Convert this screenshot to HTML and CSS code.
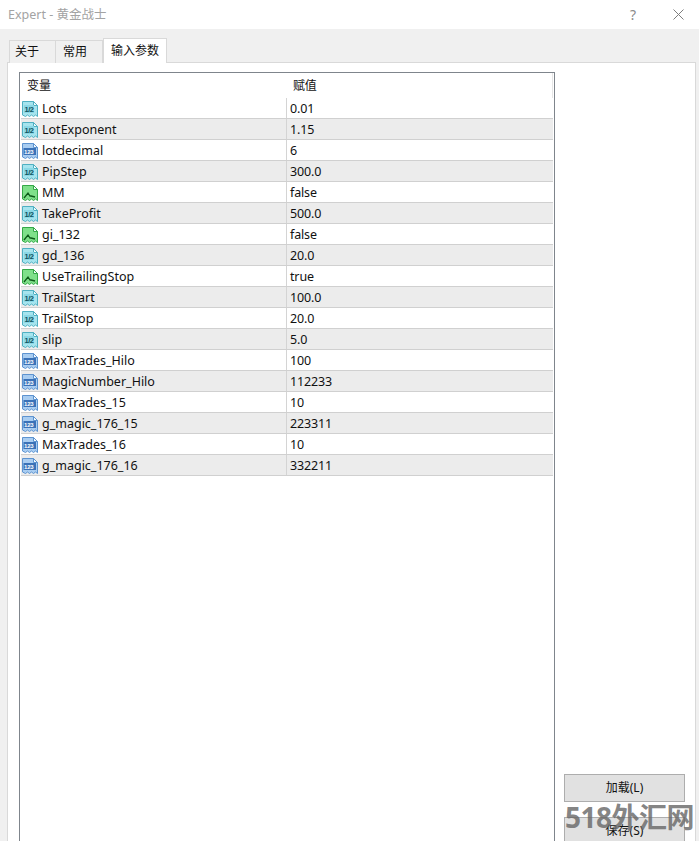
FILE: index.html
```html
<!DOCTYPE html>
<html lang="zh">
<head>
<meta charset="utf-8">
<title>Expert - 黄金战士</title>
<link rel="stylesheet" href="styles.css">
</head>
<body>
<svg class="defs" width="0" height="0">
  <defs>
    <symbol id="sheet" viewBox="0 0 16 16">
      <path d="M.5 .5h11l4 4v11l-2-1.5-2 1.5-2-1.5-2 1.5-2-1.5-2 1.5-3-1.5z" fill="currentColor"/>
      <path d="M11.5 .5v4h4z" fill="#f4fbfd"/>
    </symbol>
  </defs>
</svg>
<div class="window">
  <header class="titlebar">
    <div class="title">Expert - 黄金战士</div>
    <div class="controls">
      <span class="help">?</span>
      <svg class="close" width="11" height="11" viewBox="0 0 11 11"><path d="M.5.5l10 10M10.5.5l-10 10" stroke="#7d7d7d" fill="none"/></svg>
    </div>
  </header>
  <main class="body">
    <nav class="tabs">
      <div class="tab t1">关于</div>
      <div class="tab t2">常用</div>
      <div class="tab active">输入参数</div>
    </nav>
    <section class="panel">
      <div class="grid">
        <div class="row head"><div class="c1 hname">变量</div><div class="c2 hval">赋值</div></div>
        <div class="row"><div class="c1"><svg class="ic dbl"><use href="#sheet"/><rect class="band" x="2" y="4" width="10" height="8"/><text x="2.5" y="11">1/2</text></svg>Lots</div><div class="c2">0.01</div></div>
        <div class="row alt"><div class="c1"><svg class="ic dbl"><use href="#sheet"/><rect class="band" x="2" y="4" width="10" height="8"/><text x="2.5" y="11">1/2</text></svg>LotExponent</div><div class="c2">1.15</div></div>
        <div class="row"><div class="c1"><svg class="ic int"><use href="#sheet"/><rect class="band" x="1.5" y="5" width="12.5" height="7"/><text x="2" y="11">123</text></svg>lotdecimal</div><div class="c2">6</div></div>
        <div class="row alt"><div class="c1"><svg class="ic dbl"><use href="#sheet"/><rect class="band" x="2" y="4" width="10" height="8"/><text x="2.5" y="11">1/2</text></svg>PipStep</div><div class="c2">300.0</div></div>
        <div class="row"><div class="c1"><svg class="ic boo"><use href="#sheet"/><path class="tick" d="M2 13l4-5 2 3h1l4 1"/></svg>MM</div><div class="c2">false</div></div>
        <div class="row alt"><div class="c1"><svg class="ic dbl"><use href="#sheet"/><rect class="band" x="2" y="4" width="10" height="8"/><text x="2.5" y="11">1/2</text></svg>TakeProfit</div><div class="c2">500.0</div></div>
        <div class="row"><div class="c1"><svg class="ic boo"><use href="#sheet"/><path class="tick" d="M2 13l4-5 2 3h1l4 1"/></svg>gi_132</div><div class="c2">false</div></div>
        <div class="row alt"><div class="c1"><svg class="ic dbl"><use href="#sheet"/><rect class="band" x="2" y="4" width="10" height="8"/><text x="2.5" y="11">1/2</text></svg>gd_136</div><div class="c2">20.0</div></div>
        <div class="row"><div class="c1"><svg class="ic boo"><use href="#sheet"/><path class="tick" d="M2 13l4-5 2 3h1l4 1"/></svg>UseTrailingStop</div><div class="c2">true</div></div>
        <div class="row alt"><div class="c1"><svg class="ic dbl"><use href="#sheet"/><rect class="band" x="2" y="4" width="10" height="8"/><text x="2.5" y="11">1/2</text></svg>TrailStart</div><div class="c2">100.0</div></div>
        <div class="row"><div class="c1"><svg class="ic dbl"><use href="#sheet"/><rect class="band" x="2" y="4" width="10" height="8"/><text x="2.5" y="11">1/2</text></svg>TrailStop</div><div class="c2">20.0</div></div>
        <div class="row alt"><div class="c1"><svg class="ic dbl"><use href="#sheet"/><rect class="band" x="2" y="4" width="10" height="8"/><text x="2.5" y="11">1/2</text></svg>slip</div><div class="c2">5.0</div></div>
        <div class="row"><div class="c1"><svg class="ic int"><use href="#sheet"/><rect class="band" x="1.5" y="5" width="12.5" height="7"/><text x="2" y="11">123</text></svg>MaxTrades_Hilo</div><div class="c2">100</div></div>
        <div class="row alt"><div class="c1"><svg class="ic int"><use href="#sheet"/><rect class="band" x="1.5" y="5" width="12.5" height="7"/><text x="2" y="11">123</text></svg>MagicNumber_Hilo</div><div class="c2">112233</div></div>
        <div class="row"><div class="c1"><svg class="ic int"><use href="#sheet"/><rect class="band" x="1.5" y="5" width="12.5" height="7"/><text x="2" y="11">123</text></svg>MaxTrades_15</div><div class="c2">10</div></div>
        <div class="row alt"><div class="c1"><svg class="ic int"><use href="#sheet"/><rect class="band" x="1.5" y="5" width="12.5" height="7"/><text x="2" y="11">123</text></svg>g_magic_176_15</div><div class="c2">223311</div></div>
        <div class="row"><div class="c1"><svg class="ic int"><use href="#sheet"/><rect class="band" x="1.5" y="5" width="12.5" height="7"/><text x="2" y="11">123</text></svg>MaxTrades_16</div><div class="c2">10</div></div>
        <div class="row alt"><div class="c1"><svg class="ic int"><use href="#sheet"/><rect class="band" x="1.5" y="5" width="12.5" height="7"/><text x="2" y="11">123</text></svg>g_magic_176_16</div><div class="c2">332211</div></div>
      </div>
      <aside class="side">
        <button class="btn">加载(L)</button>
        <button class="btn">保存(S)</button>
      </aside>
    </section>
  </main>
  <div class="mark">518外汇网</div>
</div>
</body>
</html>
```
FILE: styles.css
```css
* { box-sizing: border-box; }
html, body { margin: 0; height: 100%; overflow: hidden; }
body {
  background: #fff;
  color: #111;
  font: 12.5px/21px "Noto Sans", "Noto Sans CJK SC", sans-serif;
}
.defs { position: absolute; }
.window { position: relative; width: 699px; height: 841px; display: flex; flex-direction: column; overflow: hidden; }
.titlebar { height: 29px; flex: none; display: flex; justify-content: space-between; align-items: center; padding-left: 8px; background: #fff; }
.title { font-size: 12.5px; color: #a3a3a3; }
.controls { display: flex; align-items: center; gap: 37px; padding-right: 15px; }
.help { color: #8a8a8a; font-size: 14px; }
.close { display: block; }
.body { flex: 1; display: flex; flex-direction: column; background: #f0f0f0; padding: 9px 3px 0 7px; min-height: 0; }
.tabs { display: flex; height: 25px; flex: none; align-items: flex-end; padding-left: 2px; position: relative; z-index: 1; margin-bottom: -1px; }
.tab { height: 23px; border: 1px solid #d9d9d9; border-bottom: 0; background: #f0f0f0; color: #111; line-height: 21px; font-size: 12px; }
.t1 { width: 47px; padding-left: 5px; }
.t2 { width: 47px; padding-left: 7px; border-left: 0; }
.active { width: 64px; height: 25px; padding-left: 7px; background: #fff; line-height: 23px; }
.panel { flex: 1; background: #fff; border: 1px solid #d9d9d9; border-bottom: 0; display: flex; padding: 9px 10px 0 11px; min-height: 0; }
.grid { width: 536px; flex: none; border: 1px solid #7f858c; border-bottom: 0; padding: 0 1px; }
.row { display: flex; height: 21px; border-bottom: 1px solid #d0d0d0; }
.head { height: 25px; border-bottom: 0; border-right: 1px solid #e6e6e6; }
.head .c1, .head .c2 { border: 0; font-size: 12px; line-height: 26px; padding-top: 0; }
.head .hname { padding-left: 6px; }
.head .hval { padding-left: 6px; }
.alt { background: #ececec; }
.c1 { width: 266px; flex: none; display: flex; align-items: center; gap: 4px; padding: 1px 0 0 1px; border-right: 1px solid #d4d4d4; line-height: 20px; }
.c2 { flex: 1; padding: 1px 0 0 3px; line-height: 20px; letter-spacing: -.15px; }
.ic { width: 16px; height: 16px; flex: none; }
.ic text { font-family: "Liberation Sans", sans-serif; font-weight: bold; stroke: none; }
.ic .band { stroke: none; }
.dbl { color: #a6e4ee; stroke: #4fb0c2; }
.dbl .band { fill: #8ad8e6; }
.dbl text { fill: #0f5260; font-size: 7.5px; letter-spacing: -.5px; }
.int { color: #a9cdf1; stroke: #5d93d0; }
.int .band { fill: #3a72b8; }
.int text { fill: #fff; font-size: 6px; letter-spacing: -.2px; }
.boo { color: #7fe08a; stroke: #35a848; }
.tick { fill: none; stroke: #0c5a18; stroke-width: 1.3; }
.side { flex: 1; display: flex; flex-direction: column; justify-content: flex-end; align-items: flex-end; gap: 15px; margin-bottom: -4px; }
.btn { width: 121px; height: 28px; background: #e1e1e1; border: 1px solid #adadad; color: #111; font: 12px/1 "Noto Sans", "Noto Sans CJK SC", sans-serif; padding: 0; flex: none; }
.mark { position: absolute; left: 565px; top: 800px; font: bold 28px/34px "Noto Sans", "Noto Sans CJK SC", sans-serif; color: rgba(105,105,105,.82); white-space: nowrap; letter-spacing: -.5px; }
```
